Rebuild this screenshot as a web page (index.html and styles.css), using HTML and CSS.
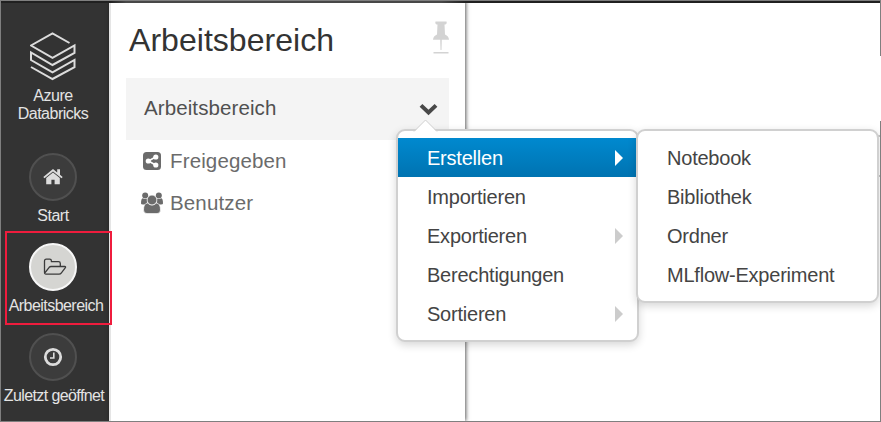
FILE: index.html
```html
<!DOCTYPE html>
<html lang="de">
<head>
<meta charset="utf-8">
<title>Azure Databricks</title>
<link rel="stylesheet" href="styles.css">
</head>
<body>
<div class="app">
  <nav class="sidebar">
    <a class="brand">
      <svg width="46" height="50" viewBox="0 0 46 50" fill="none" stroke="#dcdcdc" stroke-width="2"><path d="M39.500 11 L22.500 1.500 L1 13.500 L22.500 25.800 L44.500 13.500 V21 L22.500 33 L1 20.500 V28 L22.500 40.300 L44.500 28 V35.200 L22.500 47 L1 35"/></svg>
      <span>Azure<br>Databricks</span>
    </a>
    <a class="nav-item">
      <span class="disc"><svg width="20" height="18" viewBox="0 0 20 18" fill="#dcdcdc"><path d="M10 1 L.3 9 L1.500 10.300 L10 3.400 L18.500 10.300 L19.700 9 L17 6.700 V1.200 H14.200 V4.400 Z"/><path d="M10 4.500 L3.200 10.100 V16.300 H8.400 V11.800 H11.600 V16.300 H16.800 V10.100 Z"/></svg></span>
      <span>Start</span>
    </a>
    <a class="nav-item active">
      <span class="disc"><svg width="24" height="18" viewBox="0 0 24 18" fill="none" stroke="#3b3b3b" stroke-width="1.300" stroke-linejoin="round"><path d="M1.500 14 V3 Q1.500 1.200 3.300 1.200 H6.700 Q8.400 1.200 8.400 3 V3.700 H15.500 Q17.300 3.700 17.300 5.500 V8.300"/><path d="M1.700 15 L6.200 9.300 Q7 8.500 8 8.500 H21.700 Q23.200 8.500 22.200 9.900 L18.400 14.800 Q17.500 16.200 16 16.200 H3 Q1.500 16.200 1.500 14"/></svg></span>
      <span class="current-label">Arbeitsbereich</span>
    </a>
    <a class="nav-item">
      <span class="disc"><svg width="20" height="20" viewBox="0 0 20 20" fill="none" stroke="#dcdcdc"><circle cx="10" cy="10" r="7.700" stroke-width="2.800"/><path d="M10.800 5.500 V11 H7" stroke-width="1.600"/></svg></span>
      <span class="recent-label">Zuletzt geöffnet</span>
    </a>
  </nav>
  <main class="panel">
    <header class="panel-head">
      <h1>Arbeitsbereich</h1>
      <svg width="16" height="34" viewBox="0 0 16 34" fill="#d3d3d3"><path d="M2.500 .5 H13.500 Q14.500 2.500 12.500 3.500 H11.500 L12 13.500 Q15.700 15 16 18.700 H0 Q.3 15 4 13.500 L4.500 3.500 H3.500 Q1.500 2.500 2.500 .5Z"/><path d="M7.200 18 H8.800 L8.500 29 H7.500Z"/><path d="M.5 31 H15.500 V32.500 H.5Z"/></svg>
    </header>
    <div class="root-row">
      <span>Arbeitsbereich</span>
      <svg width="20" height="14" viewBox="0 0 20 14"><path d="M2 2.400 L9.500 9.500 L17 2.400" fill="none" stroke="#484848" stroke-width="4"/></svg>
    </div>
    <ul class="tree">
      <li><svg width="24" height="22" viewBox="0 0 24 22"><rect x="3" y="2" width="18" height="18" rx="3.500" fill="#6b6b6b"/><path d="M15.500 7 L8.500 11 L15.500 15" fill="none" stroke="#fff" stroke-width="1.600"/><g fill="#fff"><circle cx="15.800" cy="7" r="2.600"/><circle cx="8.300" cy="11" r="2.600"/><circle cx="15.800" cy="15" r="2.600"/></g></svg><span>Freigegeben</span></li>
      <li><svg width="24" height="22" viewBox="0 0 24 22" fill="#6b6b6b"><circle cx="5.200" cy="3.500" r="3"/><circle cx="18.800" cy="3.500" r="3"/><path d="M1 11.500 Q1 6.200 3 6.200 Q5.200 7.800 7 6.500 V12.500 H3 Q1 12.500 1 11.500Z M23 11.500 Q23 6.200 21 6.200 Q18.800 7.800 17 6.500 V12.500 H21 Q23 12.500 23 11.500Z"/><path stroke="#fff" stroke-width=".7" d="M7.500 11 Q3.500 11.500 3.500 18 Q3.500 21.600 7 21.600 H17 Q20.500 21.600 20.500 18 Q20.500 11.500 16.500 11 Q12 15 7.500 11Z"/><circle cx="12" cy="8" r="4.900" stroke="#fff" stroke-width=".7"/></svg><span>Benutzer</span></li>
    </ul>
  </main>
  <section class="content"></section>
  <div class="focus-box"></div>
  <i class="edge-control"></i>
  <i class="frame-right upper"></i>
  <i class="frame-right lower"></i>
  <ul class="menu">
    <li class="selected"><span>Erstellen</span><i class="arrow"></i></li>
    <li><span>Importieren</span></li>
    <li><span>Exportieren</span><i class="arrow"></i></li>
    <li><span>Berechtigungen</span></li>
    <li><span>Sortieren</span><i class="arrow"></i></li>
  </ul>
  <svg class="pointer" width="26" height="14" viewBox="0 0 26 14"><path d="M1 13 L12.500 1.500 L24 13 V14 H1Z" fill="#fff"/><path d="M1 12.500 L12.500 1 L24 12.500" fill="none" stroke="#d2d2d2"/></svg>
  <ul class="menu submenu">
    <li><span>Notebook</span></li>
    <li><span>Bibliothek</span></li>
    <li><span>Ordner</span></li>
    <li><span>MLflow-Experiment</span></li>
  </ul>
</div>
</body>
</html>
```
FILE: styles.css
```css
* { box-sizing: border-box; }
body { margin: 0; font-family: "Liberation Sans", Arial, sans-serif; background: #fff; }
ul { list-style: none; margin: 0; padding: 0; }
svg { display: block; flex: none; }
.app {
  position: relative;
  display: flex;
  width: 881px;
  height: 422px;
  overflow: hidden;
  border: 1px solid #7f7f7f;
  border-right: 0;
}
.app::before {
  content: "";
  position: absolute;
  z-index: 3;
  left: 0;
  right: 1px;
  top: 0;
  height: 2px;
  background: linear-gradient(90deg, #202020 0 109px, #484848 125px 440px, #202020 465px);
}
.sidebar {
  width: 108px;
  flex: none;
  padding-right: 4px;
  background: #333;
  color: #e4e4e4;
  font-size: 16px;
  line-height: 18px;
  letter-spacing: -.5px;
  text-align: center;
}
.brand, .nav-item { display: flex; flex-direction: column; align-items: center; white-space: nowrap; }
.brand { padding-top: 31px; height: 152px; }
.brand svg { margin-bottom: 5px; }
.nav-item { height: 90px; }
.current-label { padding-left: 6px; letter-spacing: -.55px; }
.recent-label { padding-left: 2px; letter-spacing: -.6px; }
.disc {
  display: grid;
  place-items: center;
  width: 48px;
  height: 48px;
  margin-bottom: 6px;
  flex: none;
  border: 2px solid #505050;
  border-radius: 50%;
  background: #3c3c3c;
}
.active .disc { background: #d5d5d2; border-color: #f7f7f7; }
.active .disc svg { margin-left: 4px; }
.panel {
  width: 356px;
  flex: none;
  padding: 2px 15px 0 15px;
  border-left: 2px solid #e5e5e5;
  background: #fff;
  z-index: 1;
  box-shadow: 1px 0 4px rgba(0, 0, 0, .65);
}
.panel-head { display: flex; justify-content: space-between; height: 75px; padding: 18px 1px 0 3px; }
h1 { margin: 0; font-size: 32px; line-height: 38px; font-weight: 400; color: #333; letter-spacing: .04px; }
.root-row {
  display: flex;
  justify-content: space-between;
  align-items: center;
  width: 323px;
  height: 62px;
  padding: 0 10px 2px 18px;
  background: #f4f4f4;
  color: #505050;
  font-size: 20.5px;
  letter-spacing: .1px;
}
.root-row svg { margin-top: 4px; }
.tree { padding-left: 14px; color: #6b6b6b; font-size: 20.5px; letter-spacing: .14px; }
.tree li { display: flex; align-items: center; gap: 6px; height: 42px; }
.content { flex: 1; background: #fff; }
.focus-box {
  position: absolute;
  z-index: 2;
  left: 4px;
  top: 230px;
  width: 107px;
  height: 94px;
  border: 2px solid #ef1c3d;
}
.menu {
  position: absolute;
  z-index: 4;
  left: 395px;
  top: 128px;
  width: 243px;
  height: 213px;
  padding-top: 7px;
  border: 2px solid #d0d0d0;
  border-radius: 9px;
  background: #fff;
  box-shadow: 0 3px 8px rgba(0, 0, 0, .16);
  color: #444;
  font-size: 20px;
  letter-spacing: -.22px;
}
.menu li {
  display: flex;
  align-items: center;
  justify-content: space-between;
  height: 39px;
  padding: 0 14px 0 29px;
}
.menu li span { padding-top: 2px; }
.menu .selected { color: #fff; background: linear-gradient(#0089cf, #0073b1); }
.arrow { border: 8px solid transparent; border-left-color: #ccc; border-right: 0; }
.selected .arrow { border-left-color: #fff; }
.submenu { left: 635px; width: 243px; height: 174px; }
.pointer { position: absolute; z-index: 5; left: 412px; top: 118px; }
.frame-right { position: absolute; z-index: 5; right: 0; width: 1px; background: #7f7f7f; }
.upper { top: 0; height: 55px; }
.lower { top: 120px; bottom: 0; }
.edge-control {
  position: absolute;
  z-index: 1;
  right: 0;
  top: 134px;
  width: 5px;
  height: 42px;
  border: solid #c6c6c6;
  border-width: 2px 0;
}
```
